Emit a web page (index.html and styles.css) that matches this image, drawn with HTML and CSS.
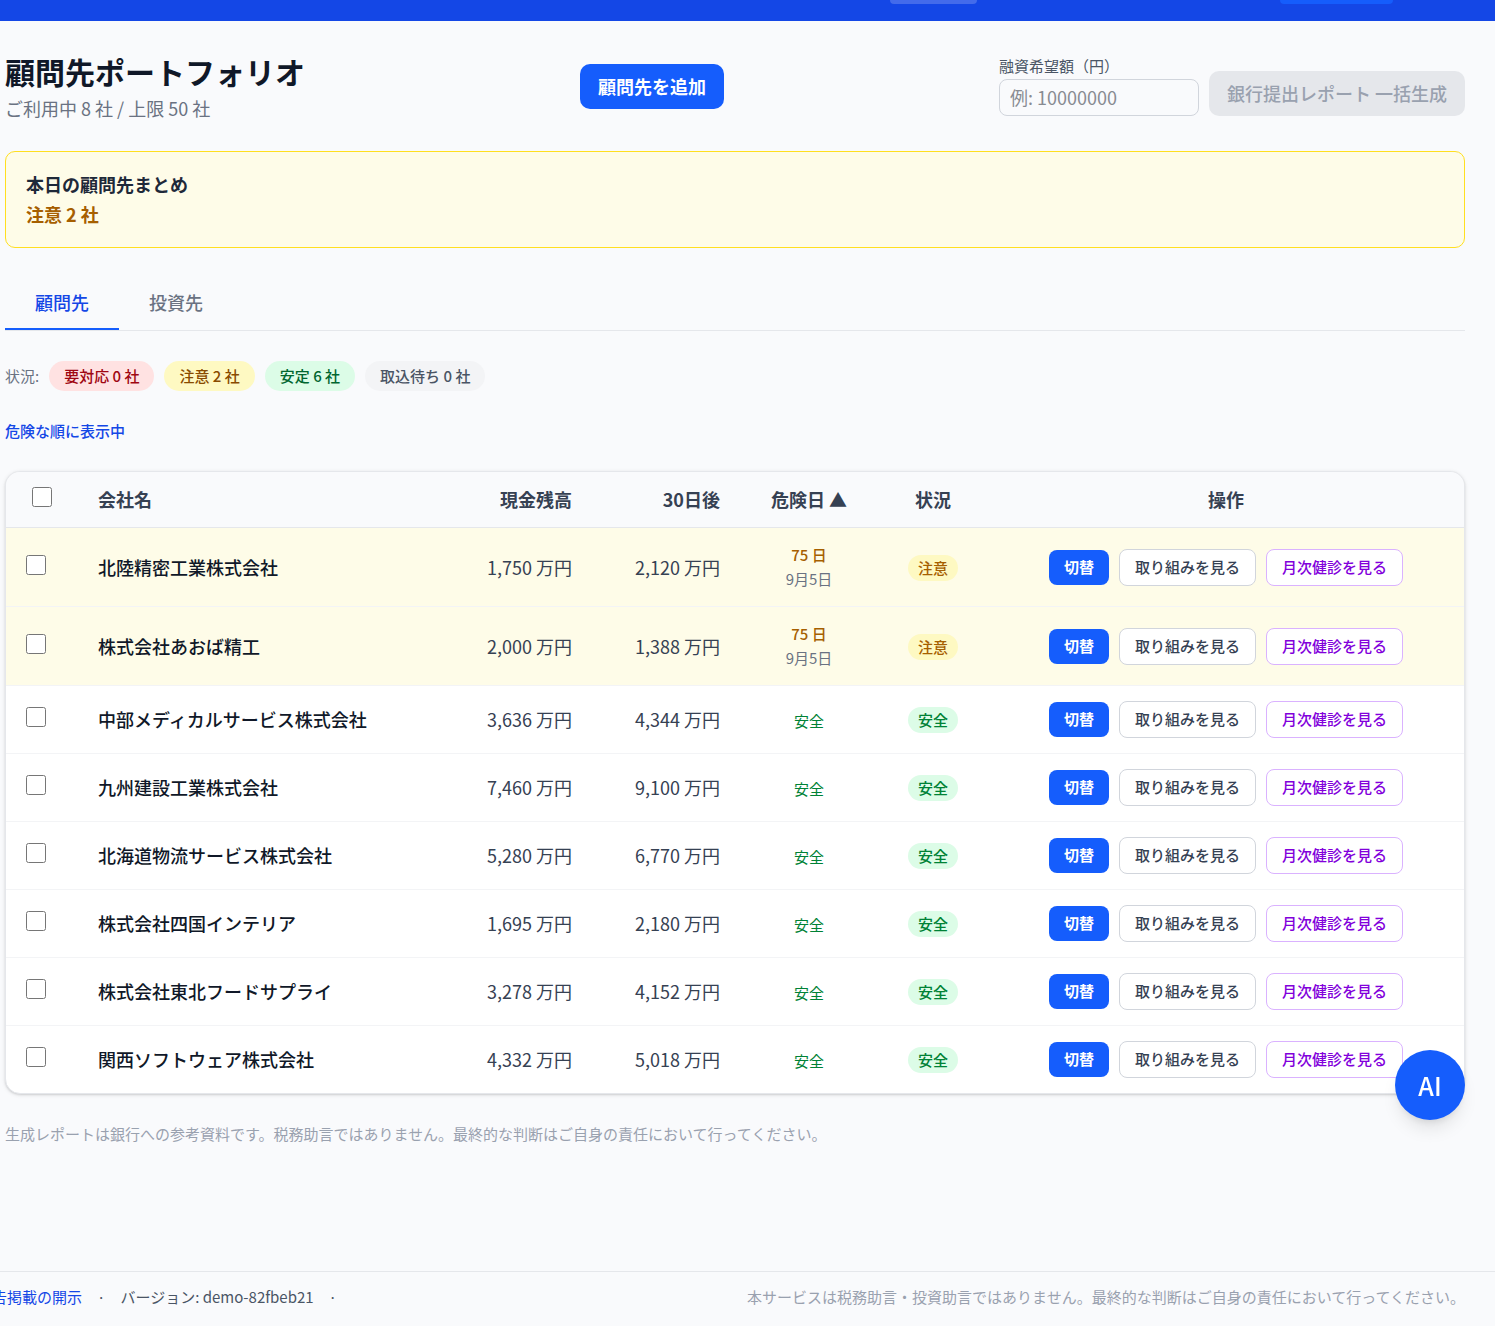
FILE: index.html
```html
<!DOCTYPE html>
<html lang="ja">
<head>
  <meta charset="UTF-8">
  <meta name="viewport" content="width=device-width, initial-scale=1">
  <title>顧問先ポートフォリオ</title>
  <link rel="stylesheet" href="styles.css">
</head>
<body>
  <header class="topbar">
    <span class="topbar-chip"></span>
    <span class="topbar-action"></span>
  </header>

  <main class="page">
    <div class="page-head">
      <div>
        <h1>顧問先ポートフォリオ</h1>
        <p class="usage">ご利用中 8 社 / 上限 50 社</p>
      </div>
      <button type="button" class="btn btn-primary">顧問先を追加</button>
      <form class="report-form">
        <div class="field">
          <label for="amount">融資希望額（円）</label>
          <input type="text" id="amount" name="amount" inputmode="numeric" placeholder="例: 10000000">
        </div>
        <button type="submit" class="btn btn-disabled" disabled>銀行提出レポート 一括生成</button>
      </form>
    </div>

    <section class="summary">
      <h2>本日の顧問先まとめ</h2>
      <p>注意 2 社</p>
    </section>

    <nav class="tabs">
      <button type="button" class="tab active">顧問先</button>
      <button type="button" class="tab">投資先</button>
    </nav>

    <div class="filters">
      <span class="filters-label">状況:</span>
      <button type="button" class="chip chip-red">要対応 0 社</button>
      <button type="button" class="chip chip-yellow">注意 2 社</button>
      <button type="button" class="chip chip-green">安定 6 社</button>
      <button type="button" class="chip chip-gray">取込待ち 0 社</button>
    </div>

    <button type="button" class="sort-link">危険な順に表示中</button>

    <div class="table-card">
      <table>
        <colgroup>
          <col class="col-check">
          <col>
          <col class="col-money">
          <col class="col-money">
          <col class="col-risk">
          <col class="col-status">
          <col class="col-actions">
        </colgroup>
        <thead>
          <tr>
            <th><input type="checkbox" aria-label="すべて選択"></th>
            <th class="left">会社名</th>
            <th class="right">現金残高</th>
            <th class="right">30日後</th>
            <th>危険日 ▲</th>
            <th>状況</th>
            <th>操作</th>
          </tr>
        </thead>
        <tbody>
          <tr class="warn">
            <td><input type="checkbox" aria-label="北陸精密工業株式会社"></td>
            <td class="company">北陸精密工業株式会社</td>
            <td class="right">1,750 万円</td>
            <td class="right">2,120 万円</td>
            <td class="risk"><div class="days">75 日</div><div class="date">9月5日</div></td>
            <td class="status"><span class="badge badge-warn">注意</span></td>
            <td><div class="actions"><button type="button" class="act act-switch">切替</button><a href="#" class="act act-plan">取り組みを見る</a><a href="#" class="act act-check">月次健診を見る</a></div></td>
          </tr>
          <tr class="warn">
            <td><input type="checkbox" aria-label="株式会社あおば精工"></td>
            <td class="company">株式会社あおば精工</td>
            <td class="right">2,000 万円</td>
            <td class="right">1,388 万円</td>
            <td class="risk"><div class="days">75 日</div><div class="date">9月5日</div></td>
            <td class="status"><span class="badge badge-warn">注意</span></td>
            <td><div class="actions"><button type="button" class="act act-switch">切替</button><a href="#" class="act act-plan">取り組みを見る</a><a href="#" class="act act-check">月次健診を見る</a></div></td>
          </tr>
          <tr>
            <td><input type="checkbox" aria-label="中部メディカルサービス株式会社"></td>
            <td class="company">中部メディカルサービス株式会社</td>
            <td class="right">3,636 万円</td>
            <td class="right">4,344 万円</td>
            <td class="risk"><span class="safe">安全</span></td>
            <td class="status"><span class="badge badge-safe">安全</span></td>
            <td><div class="actions"><button type="button" class="act act-switch">切替</button><a href="#" class="act act-plan">取り組みを見る</a><a href="#" class="act act-check">月次健診を見る</a></div></td>
          </tr>
          <tr>
            <td><input type="checkbox" aria-label="九州建設工業株式会社"></td>
            <td class="company">九州建設工業株式会社</td>
            <td class="right">7,460 万円</td>
            <td class="right">9,100 万円</td>
            <td class="risk"><span class="safe">安全</span></td>
            <td class="status"><span class="badge badge-safe">安全</span></td>
            <td><div class="actions"><button type="button" class="act act-switch">切替</button><a href="#" class="act act-plan">取り組みを見る</a><a href="#" class="act act-check">月次健診を見る</a></div></td>
          </tr>
          <tr>
            <td><input type="checkbox" aria-label="北海道物流サービス株式会社"></td>
            <td class="company">北海道物流サービス株式会社</td>
            <td class="right">5,280 万円</td>
            <td class="right">6,770 万円</td>
            <td class="risk"><span class="safe">安全</span></td>
            <td class="status"><span class="badge badge-safe">安全</span></td>
            <td><div class="actions"><button type="button" class="act act-switch">切替</button><a href="#" class="act act-plan">取り組みを見る</a><a href="#" class="act act-check">月次健診を見る</a></div></td>
          </tr>
          <tr>
            <td><input type="checkbox" aria-label="株式会社四国インテリア"></td>
            <td class="company">株式会社四国インテリア</td>
            <td class="right">1,695 万円</td>
            <td class="right">2,180 万円</td>
            <td class="risk"><span class="safe">安全</span></td>
            <td class="status"><span class="badge badge-safe">安全</span></td>
            <td><div class="actions"><button type="button" class="act act-switch">切替</button><a href="#" class="act act-plan">取り組みを見る</a><a href="#" class="act act-check">月次健診を見る</a></div></td>
          </tr>
          <tr>
            <td><input type="checkbox" aria-label="株式会社東北フードサプライ"></td>
            <td class="company">株式会社東北フードサプライ</td>
            <td class="right">3,278 万円</td>
            <td class="right">4,152 万円</td>
            <td class="risk"><span class="safe">安全</span></td>
            <td class="status"><span class="badge badge-safe">安全</span></td>
            <td><div class="actions"><button type="button" class="act act-switch">切替</button><a href="#" class="act act-plan">取り組みを見る</a><a href="#" class="act act-check">月次健診を見る</a></div></td>
          </tr>
          <tr>
            <td><input type="checkbox" aria-label="関西ソフトウェア株式会社"></td>
            <td class="company">関西ソフトウェア株式会社</td>
            <td class="right">4,332 万円</td>
            <td class="right">5,018 万円</td>
            <td class="risk"><span class="safe">安全</span></td>
            <td class="status"><span class="badge badge-safe">安全</span></td>
            <td><div class="actions"><button type="button" class="act act-switch">切替</button><a href="#" class="act act-plan">取り組みを見る</a><a href="#" class="act act-check">月次健診を見る</a></div></td>
          </tr>
        </tbody>
      </table>
    </div>

    <p class="note">生成レポートは銀行への参考資料です。税務助言ではありません。最終的な判断はご自身の責任において行ってください。</p>
  </main>

  <footer class="footer">
    <div class="footer-links">
      <a href="#">告掲載の開示</a>
      <span>·</span>
      <span>バージョン: demo-82fbeb21</span>
      <span>·</span>
    </div>
    <p>本サービスは税務助言・投資助言ではありません。最終的な判断はご自身の責任において行ってください。</p>
  </footer>

  <button type="button" class="ai-button">AI</button>
</body>
</html>
```
FILE: styles.css
```css
:root {
  --blue: #155dfc;
  --blue-dark: #1447e6;
  --gray-50: #f9fafc;
  --gray-100: #f3f4f6;
  --gray-200: #e5e7eb;
  --gray-300: #d1d5dc;
  --gray-400: #99a1af;
  --gray-500: #6a7282;
  --gray-600: #4a5565;
  --gray-700: #364153;
  --gray-900: #101828;
  --yellow-50: #fefce8;
  --yellow-100: #fef9c2;
  --yellow-700: #a65f00;
}
* {
  box-sizing: border-box;
  margin: 0;
  padding: 0;
}
body {
  display: flex;
  flex-direction: column;
  min-height: 100vh;
  overflow-x: hidden;
  background: var(--gray-50);
  color: var(--gray-900);
  font-family: "Noto Sans CJK JP", sans-serif;
  font-size: 18px;
  line-height: 25px;
}
button,
input {
  font: inherit;
}
button {
  border: none;
  cursor: pointer;
}
a {
  text-decoration: none;
}

/* Top bar */
.topbar {
  display: flex;
  justify-content: flex-end;
  gap: 303px;
  height: 21px;
  padding-right: 102px;
  background: var(--blue-dark);
}
.topbar-chip,
.topbar-action {
  height: 4px;
  border-radius: 0 0 8px 8px;
}
.topbar-chip {
  width: 87px;
  background: rgba(255, 255, 255, 0.2);
}
.topbar-action {
  width: 113px;
  background: var(--blue);
}

/* Page */
.page {
  display: flex;
  flex-direction: column;
  gap: 30px;
  padding: 30px 30px 127px 5px;
}
.page-head {
  display: flex;
  align-items: center;
  justify-content: space-between;
}
h1 {
  margin-bottom: 5px;
  font-size: 30px;
  line-height: 40px;
  font-weight: 700;
}
.usage {
  color: var(--gray-500);
}
.btn {
  padding: 10px 18px;
  border-radius: 10px;
  font-weight: 500;
}
.btn-primary {
  background: var(--blue);
  color: #fff;
  font-weight: 600;
}
.btn-disabled {
  background: var(--gray-200);
  color: var(--gray-400);
  cursor: not-allowed;
}
.report-form {
  display: flex;
  align-items: flex-end;
  gap: 10px;
}
.field {
  display: flex;
  flex-direction: column;
  gap: 3px;
}
.field label {
  font-size: 15px;
  line-height: 20px;
  color: var(--gray-600);
}
.field input {
  width: 200px;
  padding: 5px 10px;
  border: 1px solid var(--gray-300);
  border-radius: 8px;
  background: transparent;
  color: var(--gray-900);
}
.field input::placeholder {
  color: #888b92;
}

/* Summary */
.summary {
  padding: 20px;
  border: 1px solid #ffdf20;
  border-radius: 10px;
  background: var(--yellow-50);
}
.summary h2 {
  margin-bottom: 5px;
  font-size: 18px;
  line-height: 25px;
  font-weight: 600;
  color: #1e2939;
}
.summary p {
  font-weight: 600;
  color: var(--yellow-700);
}

/* Tabs */
.tabs {
  display: flex;
  border-bottom: 1px solid var(--gray-200);
}
.tab {
  padding: 12px 30px 13px;
  border-bottom: 2px solid transparent;
  background: none;
  color: var(--gray-500);
  font-weight: 500;
}
.tab.active {
  border-bottom-color: var(--blue);
  color: var(--blue-dark);
}

/* Status filters */
.filters {
  display: flex;
  align-items: center;
  gap: 10px;
  font-size: 15px;
  line-height: 20px;
}
.filters-label {
  color: var(--gray-500);
}
.chip {
  padding: 5px 15px;
  border-radius: 15px;
  font-weight: 500;
}
.chip-red {
  background: #ffe2e2;
  color: #9f0712;
}
.chip-yellow {
  background: var(--yellow-100);
  color: #894b00;
}
.chip-green {
  background: #dcfce7;
  color: #016630;
}
.chip-gray {
  background: var(--gray-100);
  color: var(--gray-600);
}
.sort-link {
  align-self: flex-start;
  background: none;
  color: var(--blue-dark);
  font-size: 15px;
  line-height: 20px;
  font-weight: 500;
}

/* Client table */
.table-card {
  overflow: hidden;
  border: 1px solid var(--gray-200);
  border-radius: 15px;
  background: #fff;
  box-shadow: 0 1px 4px rgba(0, 0, 0, 0.1), 0 1px 2px rgba(0, 0, 0, 0.1);
}
table {
  width: 100%;
  table-layout: fixed;
  border-collapse: separate;
  border-spacing: 0;
}
.col-check {
  width: 72px;
}
.col-money {
  width: 148px;
}
.col-risk {
  width: 138px;
}
.col-status {
  width: 110px;
}
.col-actions {
  width: 476px;
}
th,
td {
  padding: 15px 20px;
  vertical-align: middle;
  white-space: nowrap;
}
th {
  border-bottom: 1px solid var(--gray-200);
  background: var(--gray-50);
  color: var(--gray-700);
  font-weight: 600;
  text-align: center;
}
td {
  border-bottom: 1px solid var(--gray-100);
  color: var(--gray-700);
}
tbody tr:last-child td {
  border-bottom: none;
}
th input,
td input {
  width: 20px;
  height: 20px;
}
.left {
  text-align: left;
}
.right {
  text-align: right;
}
.warn {
  background: var(--yellow-50);
}
.company {
  color: var(--gray-900);
  font-weight: 500;
}
.risk,
.status {
  text-align: center;
}
.days,
.date {
  font-size: 15px;
  line-height: 24px;
}
.days {
  color: var(--yellow-700);
  font-weight: 500;
}
.date {
  color: var(--gray-500);
}
.safe {
  color: #008236;
  font-size: 15px;
}
.badge {
  display: inline-block;
  padding: 3px 10px;
  border-radius: 13px;
  font-size: 15px;
  line-height: 20px;
  font-weight: 500;
}
.badge-warn {
  background: var(--yellow-100);
  color: var(--yellow-700);
}
.badge-safe {
  background: #dcfce7;
  color: #008236;
}
.actions {
  display: flex;
  align-items: center;
  justify-content: center;
  gap: 10px;
}
.act {
  padding: 7px 15px 8px;
  border-radius: 8px;
  font-size: 15px;
  line-height: 20px;
  font-weight: 500;
}
.act-switch {
  background: var(--blue);
  color: #fff;
  font-weight: 600;
}
.act-plan {
  border: 1px solid var(--gray-300);
  background: #fff;
  color: var(--gray-700);
}
.act-check {
  border: 1px solid #dab2ff;
  background: #fff;
  color: #8200db;
}
.note {
  color: var(--gray-400);
  font-size: 15px;
  line-height: 20px;
}

/* Footer */
.footer {
  display: flex;
  align-items: center;
  justify-content: space-between;
  padding: 15px 30px 15px 0;
  border-top: 1px solid var(--gray-200);
  color: var(--gray-400);
  font-size: 15px;
  line-height: 20px;
}
.footer-links {
  display: flex;
  gap: 15px;
  margin-left: -8px;
  color: var(--gray-600);
}
.footer-links a {
  color: var(--blue-dark);
}

/* Assistant button */
.ai-button {
  position: fixed;
  right: 30px;
  bottom: 206px;
  width: 70px;
  height: 70px;
  border-radius: 50%;
  background: var(--blue);
  color: #fff;
  font-size: 25px;
  font-weight: 500;
  box-shadow: 0 12px 18px -4px rgba(0, 0, 0, 0.1), 0 5px 8px -4px rgba(0, 0, 0, 0.1);
}
```
